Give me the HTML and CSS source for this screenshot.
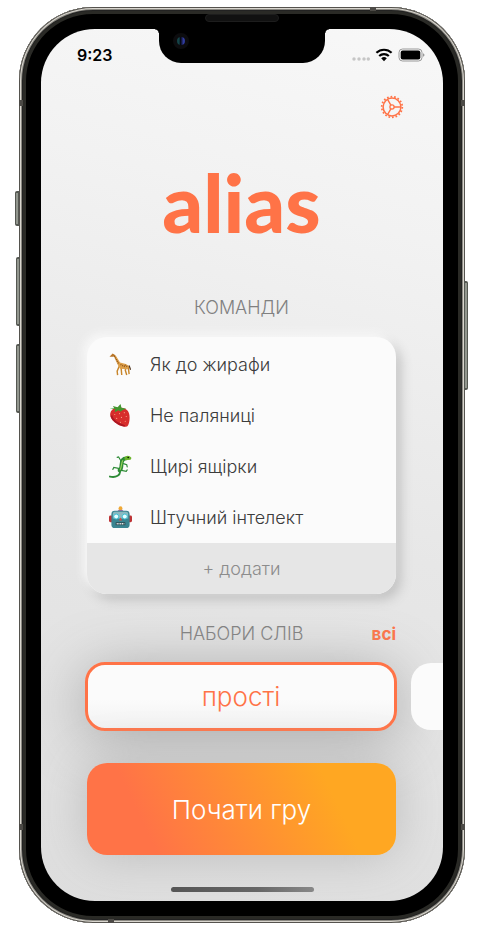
FILE: index.html
```html
<!DOCTYPE html>
<html lang="uk">
<head>
<meta charset="utf-8">
<meta name="viewport" content="width=device-width, initial-scale=1">
<title>Alias</title>
<link rel="stylesheet" href="styles.css">
</head>
<body>
<div class="phone">
  <span class="side-key side-key--mute"></span>
  <span class="side-key side-key--up"></span>
  <span class="side-key side-key--down"></span>
  <span class="side-key side-key--power"></span>
  <span class="band band--top"></span>
  <span class="band band--bottom"></span>
  <span class="band band--left-top"></span>
  <span class="band band--left-bottom"></span>
  <span class="band band--right-top"></span>
  <span class="band band--right-bottom"></span>
  <span class="speaker"></span>
  <main class="screen">
    <div class="notch"><span class="camera"></span></div>
    <header class="status">
      <time class="clock">9:23</time>
      <div class="indicators">
        <svg class="signal" width="18" height="16" viewBox="0 0 18 16" fill="#c6c6c6"><circle cx="2" cy="12" r="1.7"/><circle cx="7" cy="12" r="1.7"/><circle cx="12" cy="12" r="1.7"/><circle cx="16.300" cy="12" r="1.7"/></svg>
        <svg width="18" height="16" viewBox="0 0 18 16"><g fill="none" stroke="#000" stroke-width="2.200"><path d="M1.400 5.800a11 11 0 0 1 15.200 0"/><path d="M4.200 9a7 7 0 0 1 9.600 0"/></g><path d="M6.200 11.300a4.200 4.200 0 0 1 5.600 0L9 14.200z"/></svg>
        <svg width="27" height="16" viewBox="0 0 27 16"><rect x="1" y="2" width="23" height="12" rx="3.500" fill="none" stroke="#999"/><rect x="2.700" y="3.600" width="19.600" height="8.900" rx="2"/><path d="M25 6.200q1.500.5 1.500 1.800T25 9.800z" fill="#999"/></svg>
      </div>
    </header>
    <div class="content">
      <button class="settings" aria-label="Налаштування">
        <svg width="24" height="24" viewBox="0 0 24 24" fill="none" stroke="#ff7347"><circle cx="12" cy="12" r="10.300" stroke-width="1.700" stroke-dasharray="1.700 1.895"/><circle cx="12" cy="12" r="8.900" stroke-width="1.500"/><circle cx="12" cy="12" r="2.100" stroke-width="1.300"/><path d="M14 12h6.500M11 10.300 7.700 4.600M11 13.700l-3.300 5.700" stroke-width="1.400"/></svg>
      </button>
      <h1 class="logo">alias</h1>
      <h2 class="heading">КОМАНДИ</h2>
      <section class="teams">
        <ul class="team-list">
          <li class="team">
            <svg class="emoji" viewBox="0 0 24 24"><path d="M11 13l-2.500 6 .5 4M12.500 14l.8 9M18 14l-1 4 1.500 5M20 14l1 8" fill="none" stroke="#c8862b" stroke-width="1.500"/><path d="m4 1 3 1.500 4.500 7.500 6 1.500 3.500 2-1.500 3.500-8-.5-2.500-4.500z" fill="#dda04b"/><path d="M.5 3.800 3.800.5l2.700 1.800-2 1.700z" fill="#b87528"/><path d="m5.500 3 4.500 8M12 12l5 2.500M16.500 12.500l3 2" stroke="#8e5217" stroke-width="1.400" stroke-dasharray="1 1"/><path d="m21 13 1.500 4.500" stroke="#50351f" stroke-width="1.200"/></svg>
            <span>Як до жирафи</span>
          </li>
          <li class="team">
            <svg class="emoji" viewBox="0 0 24 24"><path d="M1.500 9c2-5 7-6 12-5 6 1 8 5 8 10 0 4-1 9-3 9.500-4 1-10-2-13-5C2 16 .5 12 1.500 9z" fill="#d72d2c"/><path d="M2.500 12c1 6 7 9 14 11" fill="none" stroke="#aa1723" stroke-width="1.800"/><path d="m.5 5 5-.5-1.500-2.500 5 1.500L12 0l1 4 5 1-4 1.500-2 1.500-2-1.500-4 2 .5-3z" fill="#43972f"/><g fill="#f6a28a"><circle cx="6" cy="11" r=".6"/><circle cx="11" cy="10" r=".6"/><circle cx="16" cy="9" r=".6"/><circle cx="8" cy="15" r=".6"/><circle cx="13" cy="14" r=".6"/><circle cx="18" cy="13" r=".6"/><circle cx="12" cy="19" r=".6"/><circle cx="17" cy="18" r=".6"/></g></svg>
            <span>Не паляниці</span>
          </li>
          <li class="team">
            <svg class="emoji" viewBox="0 0 24 24"><g fill="none" stroke="#2d8b36" stroke-linecap="round"><path d="M18 3.500c-4 0-5 3-5 7s-1 5-2 5.500" stroke-width="4"/><path d="M11 16c2 5-4 8-10 6.500" stroke-width="2"/><path d="m13 7-3-5-1.500.5M15 9l3.500 1 .5 2.500M10 14l-5-1-1 2M13 16l5 1 1-1.500" stroke-width="1.200"/></g><path d="M16 3c2-3 5-3 7.500 0L22.500 5l-5.500.5z" fill="#6bb52b"/><path d="M14.500 5.500c-2 3-1 7-3 10" fill="none" stroke="#9ad35a" stroke-width="1.200"/><circle cx="20" cy="2.500" r=".8"/></svg>
            <span>Щирі ящірки</span>
          </li>
          <li class="team">
            <svg class="emoji" viewBox="0 0 24 24"><rect y="10" width="24" height="7" rx="1.500" fill="#bd3335"/><rect x="2.500" y="5" width="19" height="18" rx="3.500" fill="#3a8490"/><path d="M4 8q0-2 2-2h12q2 0 2 2v5H4z" fill="#8ab9c0"/><path d="M9 5q3-3 6 0z" fill="#724a8b"/><circle cx="12" cy="2.300" r="2" fill="#f0a935"/><g fill="#e8ffff" stroke="#39bdd2"><circle cx="7.500" cy="11" r="2.600"/><circle cx="16.500" cy="11" r="2.600"/></g><path d="m12 12 1.500 3h-3z" fill="#e04139"/><path d="M7 18.500h10" stroke="#24444b" stroke-width="3"/><path d="M8 18.500h8" stroke="#e7eeee" stroke-width="1.600" stroke-dasharray="1.200 .6"/></svg>
            <span>Штучний інтелект</span>
          </li>
        </ul>
        <button class="add">+ додати</button>
      </section>
      <div class="sets-title">
        <h2 class="heading">НАБОРИ СЛІВ</h2>
        <a class="all" href="#sets">всі</a>
      </div>
      <div class="sets" id="sets">
        <button class="set set--active">прості</button>
        <button class="set" aria-label="Наступний набір"></button>
      </div>
      <button class="start">Почати гру</button>
    </div>
    <span class="home"></span>
  </main>
</div>
</body>
</html>
```
FILE: styles.css
```css
* { box-sizing: border-box; }

body {
  margin: 0;
  padding: 7px 18px 7px 19px;
  background: #fff;
  font-family: Inter, "Liberation Sans", sans-serif;
  font-weight: 300;
}

h1, h2, ul { margin: 0; padding: 0; }

button {
  border: 0;
  padding: 0;
  background: none;
  font: inherit;
}

.phone {
  position: relative;
  padding: 22px;
  border-radius: 74px;
  background: #000;
  box-shadow: inset 0 0 0 1px #55534e, inset 0 0 0 2px #d9d6cf, inset 0 0 0 3px #8b8982, inset 0 0 0 4px #222, inset 0 0 0 7px #2a2a26;
}

.side-key {
  position: absolute;
  left: -4px;
  width: 4px;
  border: 1px solid #555852;
  border-width: 2px 1px;
  border-radius: 2px 0 0 2px;
  background: #92968e;
}
.side-key--mute { top: 184px; height: 35px; }
.side-key--up { top: 250px; height: 69px; left: -3px; }
.side-key--down { top: 337px; height: 69px; left: -3px; }
.side-key--power { top: 274px; height: 109px; left: auto; right: -3px; border-radius: 0 2px 2px 0; }

.band { position: absolute; background: #4c4a46; }
.band--top { top: 0; right: 89px; width: 6px; height: 4px; }
.band--bottom { bottom: 0; left: 89px; width: 6px; height: 4px; }
.band--left-top, .band--right-top { top: 93px; width: 4px; height: 6px; }
.band--left-bottom, .band--right-bottom { bottom: 93px; width: 4px; height: 6px; }
.band--left-top, .band--left-bottom { left: 0; }
.band--right-top, .band--right-bottom { right: 0; }

.speaker {
  position: absolute;
  top: 7px;
  left: 50%;
  width: 74px;
  height: 8px;
  margin-left: -37px;
  border: 1px solid #1d1d1d;
  border-radius: 4px;
  background: #111;
}

.screen {
  position: relative;
  display: flex;
  flex-direction: column;
  overflow: hidden;
  padding-bottom: 9px;
  border-radius: 54px;
  background: linear-gradient(195deg, #f8f8f8 0%, #f2f2f2 22%, #e7e7e7 55%, #dedede 100%);
}

.notch {
  position: absolute;
  top: 0;
  left: 50%;
  width: 166px;
  height: 34px;
  margin-left: -83px;
  border-radius: 0 0 22px 22px;
  background: #000;
}
.notch::before, .notch::after {
  content: "";
  position: absolute;
  top: 0;
  width: 4px;
  height: 4px;
}
.notch::before { left: -4px; background: radial-gradient(circle at 0 100%, transparent 3px, #000 4px); }
.notch::after { right: -4px; background: radial-gradient(circle at 100% 100%, transparent 3px, #000 4px); }

.camera {
  position: absolute;
  top: 4px;
  left: 14px;
  width: 16px;
  height: 16px;
  border: 4px solid #0c0c0e;
  border-radius: 50%;
  background: linear-gradient(90deg, #144448 25%, #050510 45%, #303b9c 80%);
}

.status {
  display: flex;
  justify-content: space-between;
  align-items: center;
  height: 34px;
  margin-top: 9px;
  padding: 0 18px 0 36px;
}
.clock { font-size: 16px; font-weight: 600; }
.indicators { display: flex; align-items: center; gap: 5px; }

.content {
  display: flex;
  flex-direction: column;
  padding: 0 47px 0 46px;
}

.settings {
  align-self: flex-end;
  width: 24px;
  height: 24px;
  margin: 23px -8px 0 0;
}
.settings svg { display: block; }

.logo {
  margin-top: 38px;
  color: #ff7347;
  font-family: Lato, sans-serif;
  font-size: 80px;
  font-weight: 900;
  line-height: 90px;
  text-align: center;
}

.heading {
  margin-top: 49px;
  color: #808080;
  font-size: 18px;
  font-weight: 300;
  line-height: 24px;
  text-align: center;
}

.teams {
  display: flex;
  flex-direction: column;
  overflow: hidden;
  margin-top: 17px;
  padding-top: 2px;
  border-radius: 20px;
  background: #fbfbfb;
  box-shadow: -4px -4px 8px #f8f8f8, 5px 6px 12px #c2c2c2;
}
.team-list { list-style: none; }
.team {
  display: flex;
  align-items: center;
  gap: 18px;
  height: 51px;
  padding-left: 22px;
  color: #3c3c3c;
  font-size: 18px;
}
.emoji { width: 23px; height: 23px; }

.add {
  height: 51px;
  background: #e6e6e6;
  color: #8c8c8c;
  font-size: 18px;
}

.sets-title {
  display: grid;
  grid-template-columns: 1fr auto 1fr;
  align-items: center;
  margin-top: 28px;
}
.sets-title .heading { grid-column: 2; margin: 0; }
.all {
  justify-self: end;
  color: #ff7347;
  font-size: 17px;
  font-weight: 700;
  text-decoration: none;
}

.sets {
  display: flex;
  gap: 14px;
  margin: 16px -1px 0 -2px;
}
.set {
  flex: 0 0 100%;
  height: 67px;
  margin: 1px 0;
  border-radius: 20px;
  background: #fbfbfb;
  color: #ff7347;
  font-size: 26px;
}
.set--active {
  height: 69px;
  margin: 0;
  border: 3px solid #ff7347;
  background: linear-gradient(#fbfbfb 55%, #f2f2f2);
  box-shadow: 0 8px 60px #a6a6a6;
}

.start {
  height: 92px;
  margin-top: 32px;
  border-radius: 20px;
  background: linear-gradient(65deg, #ff7347 20%, #ffa722 78%);
  color: #fff;
  font-size: 26px;
  box-shadow: 0 0 50px #bbb;
}

.home {
  align-self: center;
  width: 143px;
  height: 5px;
  margin-top: 32px;
  border-radius: 3px;
  background: linear-gradient(90deg, #555, #666 60%, #888);
}
```
